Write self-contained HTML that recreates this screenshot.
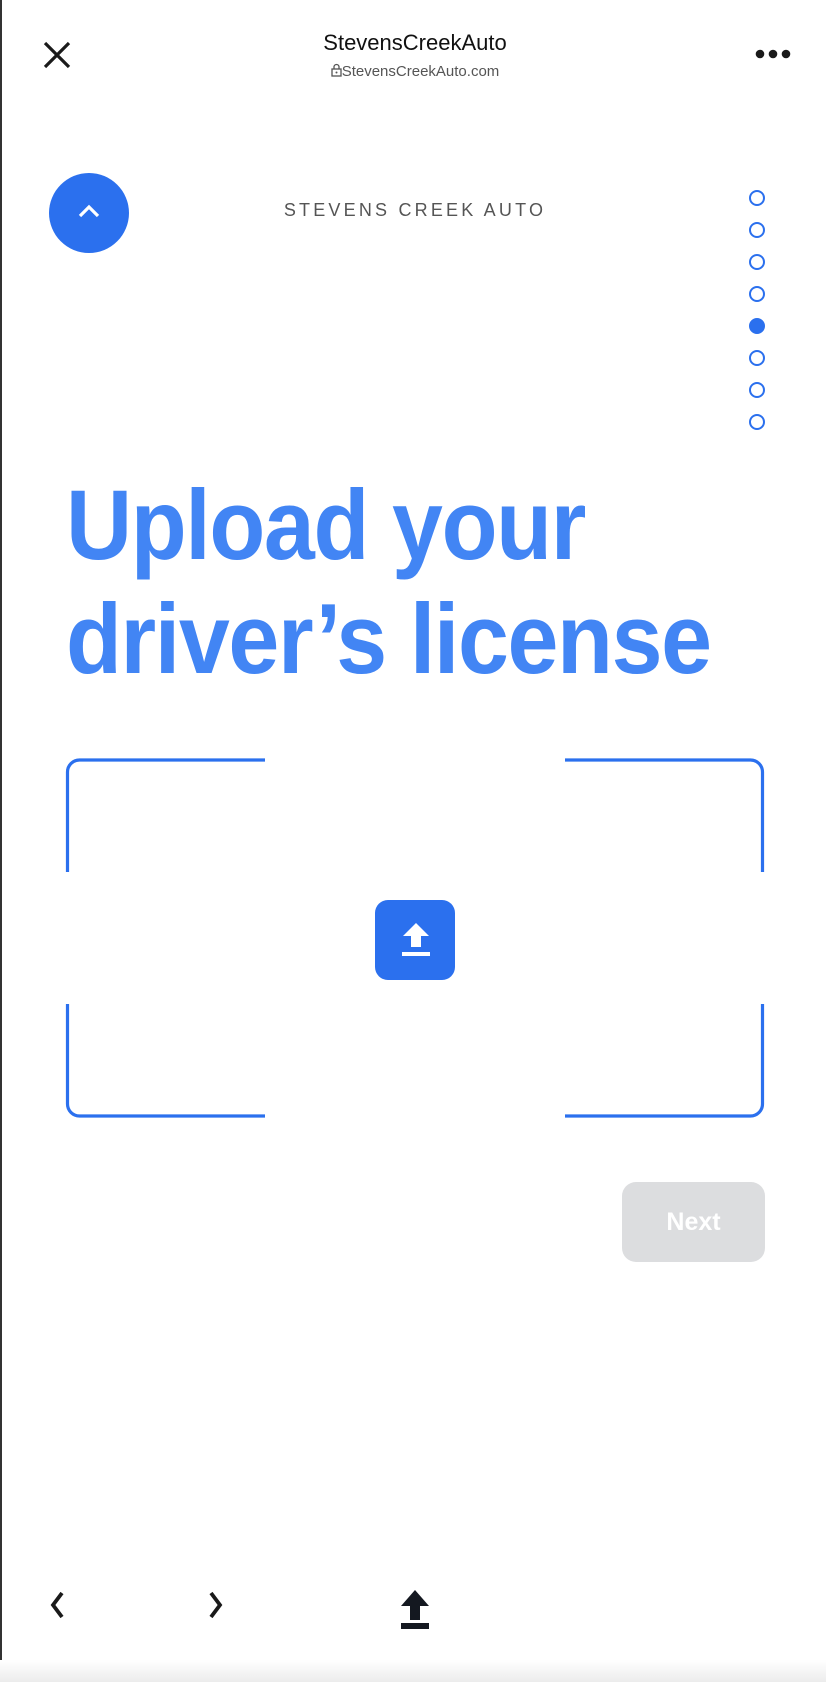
<!DOCTYPE html>
<html><head><meta charset="utf-8"><style>
html,body{margin:0;padding:0;background:#fff;}
body{width:826px;height:1682px;position:relative;overflow:hidden;font-family:"Liberation Sans",sans-serif;}
.abs{position:absolute;}
.lb{left:0;top:0;width:2px;height:1682px;background:#333;}
.title{left:0;width:830px;text-align:center;top:30px;font-size:22px;color:#111;}
.url{left:0;width:830px;text-align:center;top:63px;font-size:15px;color:#555;}
.brand{left:0;width:830px;text-align:center;top:200px;font-size:18px;letter-spacing:3.2px;color:#555;}
.circ{left:49px;top:173px;width:80px;height:80px;border-radius:50%;background:#2b70ee;}
.dot{left:749px;border:2px solid #2b70ee;border-radius:50%;box-sizing:border-box;width:16px;height:16px;}
.h{left:66px;top:468px;font-size:99px;font-weight:bold;color:#4285f4;line-height:114px;letter-spacing:-1.5px;transform:scaleX(0.925);transform-origin:0 0;white-space:nowrap;}
.ub{left:375px;top:900px;width:80px;height:80px;border-radius:13px;background:#2b70ee;}
.next{left:622px;top:1182px;width:143px;height:80px;border-radius:14px;background:#dcdddf;color:#fff;font-size:25px;font-weight:bold;text-align:center;line-height:80px;}
.grad{left:0;top:1660px;width:826px;height:22px;background:linear-gradient(#fff,#ececec);}
</style></head><body>
<div class="abs lb"></div>
<svg class="abs" style="left:42px;top:40px" width="30" height="30" viewBox="0 0 30 30"><path d="M3 3L27 27M27 3L3 27" stroke="#1a1a1a" stroke-width="3.2"/></svg>
<div class="abs title">StevensCreekAuto</div>
<div class="abs url"><svg width="11" height="14" viewBox="0 0 11 14" style="vertical-align:-1px"><rect x="1" y="6" width="9" height="7" fill="none" stroke="#555" stroke-width="1.3"/><path d="M3 6V4a2.5 2.5 0 0 1 5 0v2" fill="none" stroke="#555" stroke-width="1.3"/><circle cx="5.5" cy="9.5" r="1" fill="#555"/></svg>StevensCreekAuto.com</div>
<svg class="abs" style="left:755px;top:48px" width="36" height="12"><circle cx="5" cy="6" r="4.3" fill="#1a1a1a"/><circle cx="18" cy="6" r="4.3" fill="#1a1a1a"/><circle cx="31" cy="6" r="4.3" fill="#1a1a1a"/></svg>
<div class="abs circ"><svg style="position:absolute;left:28px;top:30px" width="24" height="16"><path d="M3 13L12 4L21 13" stroke="#fff" stroke-width="3.2" fill="none"/></svg></div>
<div class="abs brand">STEVENS CREEK AUTO</div>
<div class="abs dot" style="top:190px"></div>
<div class="abs dot" style="top:222px"></div>
<div class="abs dot" style="top:254px"></div>
<div class="abs dot" style="top:286px"></div>
<div class="abs dot" style="top:318px;background:#2b70ee"></div>
<div class="abs dot" style="top:350px"></div>
<div class="abs dot" style="top:382px"></div>
<div class="abs dot" style="top:414px"></div>
<div class="abs h">Upload your<br>driver’s license</div>
<svg class="abs" style="left:0;top:0" width="826" height="1682">
<g fill="none" stroke="#2b70ee" stroke-width="3.2">
<path d="M67.5 872V772a12 12 0 0 1 12-12H265"/>
<path d="M565 760H750.5a12 12 0 0 1 12 12V872"/>
<path d="M67.5 1004V1104a12 12 0 0 0 12 12H265"/>
<path d="M565 1116H750.5a12 12 0 0 0 12-12V1004"/>
</g>
</svg>
<div class="abs ub"><svg style="position:absolute;left:26px;top:22px" width="30" height="36" viewBox="0 0 30 36"><path d="M15 1L28 14H20V25H10V14H2Z" fill="#fff"/><rect x="1" y="30" width="28" height="4" fill="#fff"/></svg></div>
<div class="abs next">Next</div>
<svg class="abs" style="left:46px;top:1590px" width="22" height="30"><path d="M16 3L7 15L16 27" stroke="#1a1a1a" stroke-width="3.8" fill="none"/></svg>
<svg class="abs" style="left:205px;top:1590px" width="22" height="30"><path d="M6 3L15 15L6 27" stroke="#1a1a1a" stroke-width="3.8" fill="none"/></svg>
<svg class="abs" style="left:400px;top:1590px" width="30" height="36" viewBox="0 0 30 36"><path d="M15 0L29 16H20V30H10V16H1Z" fill="#141820"/></svg>
<svg class="abs" style="left:400px;top:1622px" width="30" height="8"><rect x="1" y="1" width="28" height="6" fill="#141820"/></svg>
<div class="abs grad"></div>
</body></html>
